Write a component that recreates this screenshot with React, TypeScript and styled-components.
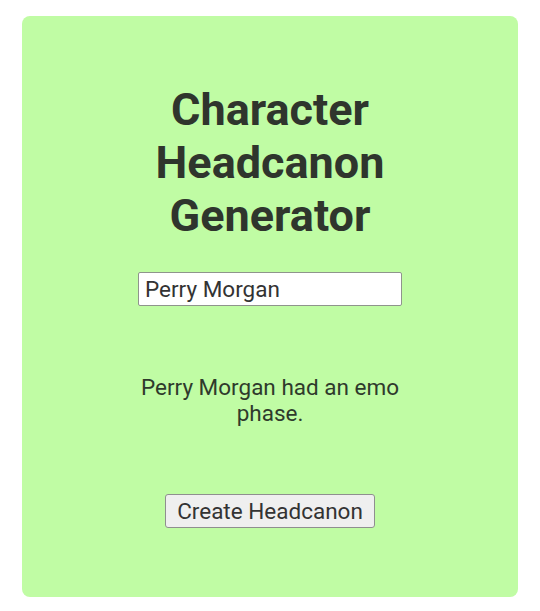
import React, { useState } from 'react';
import styled, { createGlobalStyle } from 'styled-components';

const GlobalStyle = createGlobalStyle`
  body {
    margin: 0;
    background: #ffffff;
    font-family: Roboto, "Liberation Sans", sans-serif;
  }
`;

const Page = styled.div`
  box-sizing: border-box;
  width: 540px;
  padding: 16px 22px 14px 22px;
`;

const Card = styled.div`
  box-sizing: border-box;
  height: 581px;
  background: #c0fca4;
  border-radius: 8px;
  display: flex;
  flex-direction: column;
  align-items: center;
  padding-top: 67px;
  color: #323a30;
`;

const Inner = styled.div`
  width: 290px;
  display: flex;
  flex-direction: column;
  align-items: center;
  text-align: center;
`;

const Title = styled.h1`
  margin: 0;
  font-size: 45px;
  line-height: 53px;
  font-weight: 700;
  color: #2f352d;
`;

const NameInput = styled.input`
  box-sizing: border-box;
  margin-top: 30px;
  width: 264px;
  height: 34px;
  padding: 0 6px;
  font-family: Roboto, "Liberation Sans", sans-serif;
  font-size: 22.5px;
  color: #333;
  background: #ffffff;
  border: 1px solid #8f948c;
  border-radius: 2px;
  outline: none;
`;

const Result = styled.p`
  margin: 68px 0 0 0;
  font-size: 22.5px;
  line-height: 26px;
  color: #2f3a2c;
`;

const Button = styled.button`
  margin-top: 68px;
  height: 34px;
  padding: 0 11px;
  font-family: Roboto, "Liberation Sans", sans-serif;
  font-size: 22.5px;
  color: #333;
  background: #efefef;
  border: 1px solid #8f8f8f;
  border-radius: 3px;
`;

const App = () => {
  const [name, setName] = useState('Perry Morgan');

  return (
    <Page>
      <GlobalStyle />
      <Card>
        <Inner>
          <Title>Character Headcanon Generator</Title>
          <NameInput value={name} onChange={(e) => setName(e.target.value)} />
          <Result>{name} had an emo phase.</Result>
          <Button>Create Headcanon</Button>
        </Inner>
      </Card>
    </Page>
  );
};

export default App;
